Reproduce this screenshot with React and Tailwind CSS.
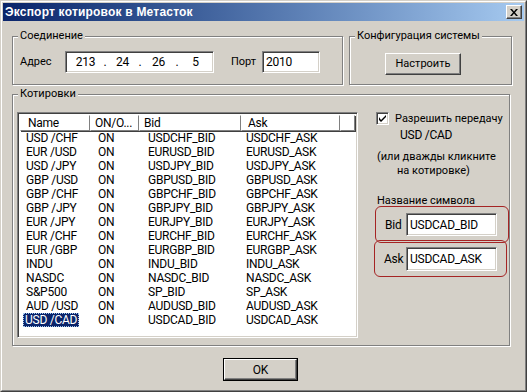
import React from "react";

const rows = [
  ["USD /CHF", "ON", "USDCHF_BID", "USDCHF_ASK"],
  ["EUR /USD", "ON", "EURUSD_BID", "EURUSD_ASK"],
  ["USD /JPY", "ON", "USDJPY_BID", "USDJPY_ASK"],
  ["GBP /USD", "ON", "GBPUSD_BID", "GBPUSD_ASK"],
  ["GBP /CHF", "ON", "GBPCHF_BID", "GBPCHF_ASK"],
  ["GBP /JPY", "ON", "GBPJPY_BID", "GBPJPY_ASK"],
  ["EUR /JPY", "ON", "EURJPY_BID", "EURJPY_ASK"],
  ["EUR /CHF", "ON", "EURCHF_BID", "EURCHF_ASK"],
  ["EUR /GBP", "ON", "EURGBP_BID", "EURGBP_ASK"],
  ["INDU", "ON", "INDU_BID", "INDU_ASK"],
  ["NASDC", "ON", "NASDC_BID", "NASDC_ASK"],
  ["S&P500", "ON", "SP_BID", "SP_ASK"],
  ["AUD /USD", "ON", "AUDUSD_BID", "AUDUSD_ASK"],
  ["USD /CAD", "ON", "USDCAD_BID", "USDCAD_ASK"],
];

function Group({ label, className, children }) {
  return (
    <div
      className={
        "relative border border-[#808080] shadow-[inset_1px_1px_0_#fff,1px_1px_0_#fff] " +
        className
      }
    >
      <div className="absolute -top-[8px] left-[5px] bg-[#d4d0c8] px-[2px] leading-[14px] text-[11px] tracking-normal">
        {label}
      </div>
      {children}
    </div>
  );
}

function Sunken({ className, children }) {
  return (
    <div
      className={
        "bg-white border border-t-[#808080] border-l-[#808080] border-r-white border-b-white shadow-[inset_1px_1px_0_#404040,inset_-1px_-1px_0_#d4d0c8] " +
        className
      }
    >
      {children}
    </div>
  );
}

function HeaderCell({ w, children, className = "" }) {
  return (
    <div
      className={
        "h-[16px] flex items-center border border-t-white border-l-white border-r-[#808080] border-b-[#808080] shadow-[1px_1px_0_#404040] " +
        w +
        " " +
        className
      }
    >
      {children}
    </div>
  );
}

export default function App() {
  return (
    <div className="w-[527px] h-[392px] bg-[#d4d0c8] border border-t-[#d4d0c8] border-l-[#d4d0c8] border-r-[#404040] border-b-[#404040] font-['Roboto','Liberation_Sans',sans-serif] text-[12px] tracking-[-0.25px] text-black">
      <div className="h-full flex flex-col border border-t-white border-l-white border-r-[#808080] border-b-[#808080] p-[1px]">
        {/* Title bar */}
        <div className="h-[18px] flex items-center justify-between bg-gradient-to-r from-[#0a246a] to-[#a6caf0] pl-[2px] pr-[2px]">
          <span className="text-white font-bold text-[12px] font-['Liberation_Sans',sans-serif] tracking-[0.2px] leading-[18px]">
            Экспорт котировок в Метасток
          </span>
          <div className="w-[16px] h-[14px] bg-[#d4d0c8] border border-t-white border-l-white border-r-[#404040] border-b-[#404040] shadow-[inset_-1px_-1px_0_#808080] flex items-center justify-center">
            <svg width="8" height="7" viewBox="0 0 8 7">
              <path d="M0 0 L2 0 L4 2.5 L6 0 L8 0 L5 3.5 L8 7 L6 7 L4 4.5 L2 7 L0 7 L3 3.5 Z" fill="#000" />
            </svg>
          </div>
        </div>

        {/* Content */}
        <div className="flex-1 flex flex-col pl-[9px]">
          {/* Row 1 */}
          <div className="mt-[15px] flex gap-[6px]">
            <Group label="Соединение" className="w-[331px] h-[49px]">
              <div className="flex items-center pt-[14px] pl-[7px]">
                <span className="w-[45px] text-[11px] tracking-normal">Адрес</span>
                <Sunken className="w-[149px] h-[22px] flex items-center pl-[2px]">
                  <span className="w-[35px] text-center">213</span>
                  <span className="w-[4px] text-center">.</span>
                  <span className="w-[31px] text-center">24</span>
                  <span className="w-[4px] text-center">.</span>
                  <span className="w-[33px] text-center">26</span>
                  <span className="w-[4px] text-center">.</span>
                  <span className="w-[33px] text-center">5</span>
                </Sunken>
                <span className="ml-[17px] w-[31px] text-[11px] tracking-normal">Порт</span>
                <Sunken className="w-[58px] h-[22px] flex items-center pl-[3px]">
                  2010
                </Sunken>
              </div>
            </Group>
            <Group label="Конфигурация системы" className="w-[163px] h-[49px]">
              <div className="pt-[16px] pl-[35px]">
                <div className="w-[76px] h-[22px] flex items-center justify-center text-[11px] tracking-normal border border-t-white border-l-white border-r-[#404040] border-b-[#404040] shadow-[inset_-1px_-1px_0_#808080]">
                  Настроить
                </div>
              </div>
            </Group>
          </div>

          {/* Row 2 */}
          <Group label="Котировки" className="mt-[9px] w-[498px] h-[252px]">
            <div className="flex pt-[17px] pl-[4px]">
              {/* List */}
              <Sunken className="w-[343px] h-[226px] p-[2px] overflow-hidden">
                <div className="flex">
                  <HeaderCell w="w-[70px]" className="pl-[7px]">Name</HeaderCell>
                  <HeaderCell w="w-[49px]" className="pl-[4px]">ON/O...</HeaderCell>
                  <HeaderCell w="w-[102px]" className="pl-[4px]">Bid</HeaderCell>
                  <HeaderCell w="w-[99px]" className="pl-[6px]">Ask</HeaderCell>
                  <HeaderCell w="flex-1">{""}</HeaderCell>
                </div>
                {rows.map((r, i) => {
                  const sel = i === rows.length - 1;
                  return (
                    <div key={i} className="flex h-[14px] items-center leading-[14px]">
                      <div className="w-[70px]">
                        {sel ? (
                          <span className="ml-[3px] px-[2px] bg-[#0a246a] text-white outline outline-1 outline-dotted outline-[#a6caf0] -outline-offset-1 inline-block h-[14px]">
                            {r[0]}
                          </span>
                        ) : (
                          <span className="pl-[6px]">{r[0]}</span>
                        )}
                      </div>
                      <div className="w-[49px] pl-[8px]">{r[1]}</div>
                      <div className="w-[102px] pl-[9px]">{r[2]}</div>
                      <div className="w-[99px] pl-[5px]">{r[3]}</div>
                    </div>
                  );
                })}
              </Sunken>

              {/* Right panel */}
              <div className="ml-[18px] flex flex-col leading-[14px]">
                <div className="flex items-center h-[13px]">
                  <div className="w-[13px] h-[13px] bg-white border border-t-[#808080] border-l-[#808080] border-r-white border-b-white shadow-[inset_1px_1px_0_#404040,inset_-1px_-1px_0_#d4d0c8] flex items-center justify-center">
                    <svg width="7" height="7" viewBox="0 0 7 7">
                      <path d="M0 2 L0 5 L2 7 L7 2 L7 0 L2 5 Z" fill="#000" />
                    </svg>
                  </div>
                  <span className="ml-[6px] text-[11px] tracking-normal">Разрешить передачу</span>
                </div>
                <div className="mt-[3px] pl-[24px]">USD /CAD</div>
                <div className="mt-[8px] pl-[1px] text-[11px] tracking-normal">(или дважды кликните</div>
                <div className="pl-[21px] text-[11px] tracking-normal">на котировке)</div>
                <div className="mt-[16px] pl-[1px] text-[11px] tracking-normal">Название символа</div>
                <div className="-mt-[2px] -ml-[1px] w-[134px] h-[37px] border border-[#a52424] rounded-[6px] flex items-center pl-[9px]">
                  <span className="w-[21px]">Bid</span>
                  <Sunken className="w-[91px] h-[23px] flex items-center pl-[3px]">USDCAD_BID</Sunken>
                </div>
                <div className="-mt-[3px] -ml-[2px] w-[133px] h-[37px] border border-[#a52424] rounded-[6px] flex items-center pl-[9px]">
                  <span className="w-[22px]">Ask</span>
                  <Sunken className="w-[91px] h-[24px] flex items-center pl-[3px]">USDCAD_ASK</Sunken>
                </div>
              </div>
            </div>
          </Group>

          {/* OK button */}
          <div className="mt-[12px] ml-[211px] w-[75px] h-[23px] border border-black">
            <div className="w-full h-full flex items-center justify-center border border-t-white border-l-white border-r-[#404040] border-b-[#404040] shadow-[inset_-1px_-1px_0_#808080]">
              OK
            </div>
          </div>
        </div>
      </div>
    </div>
  );
}
